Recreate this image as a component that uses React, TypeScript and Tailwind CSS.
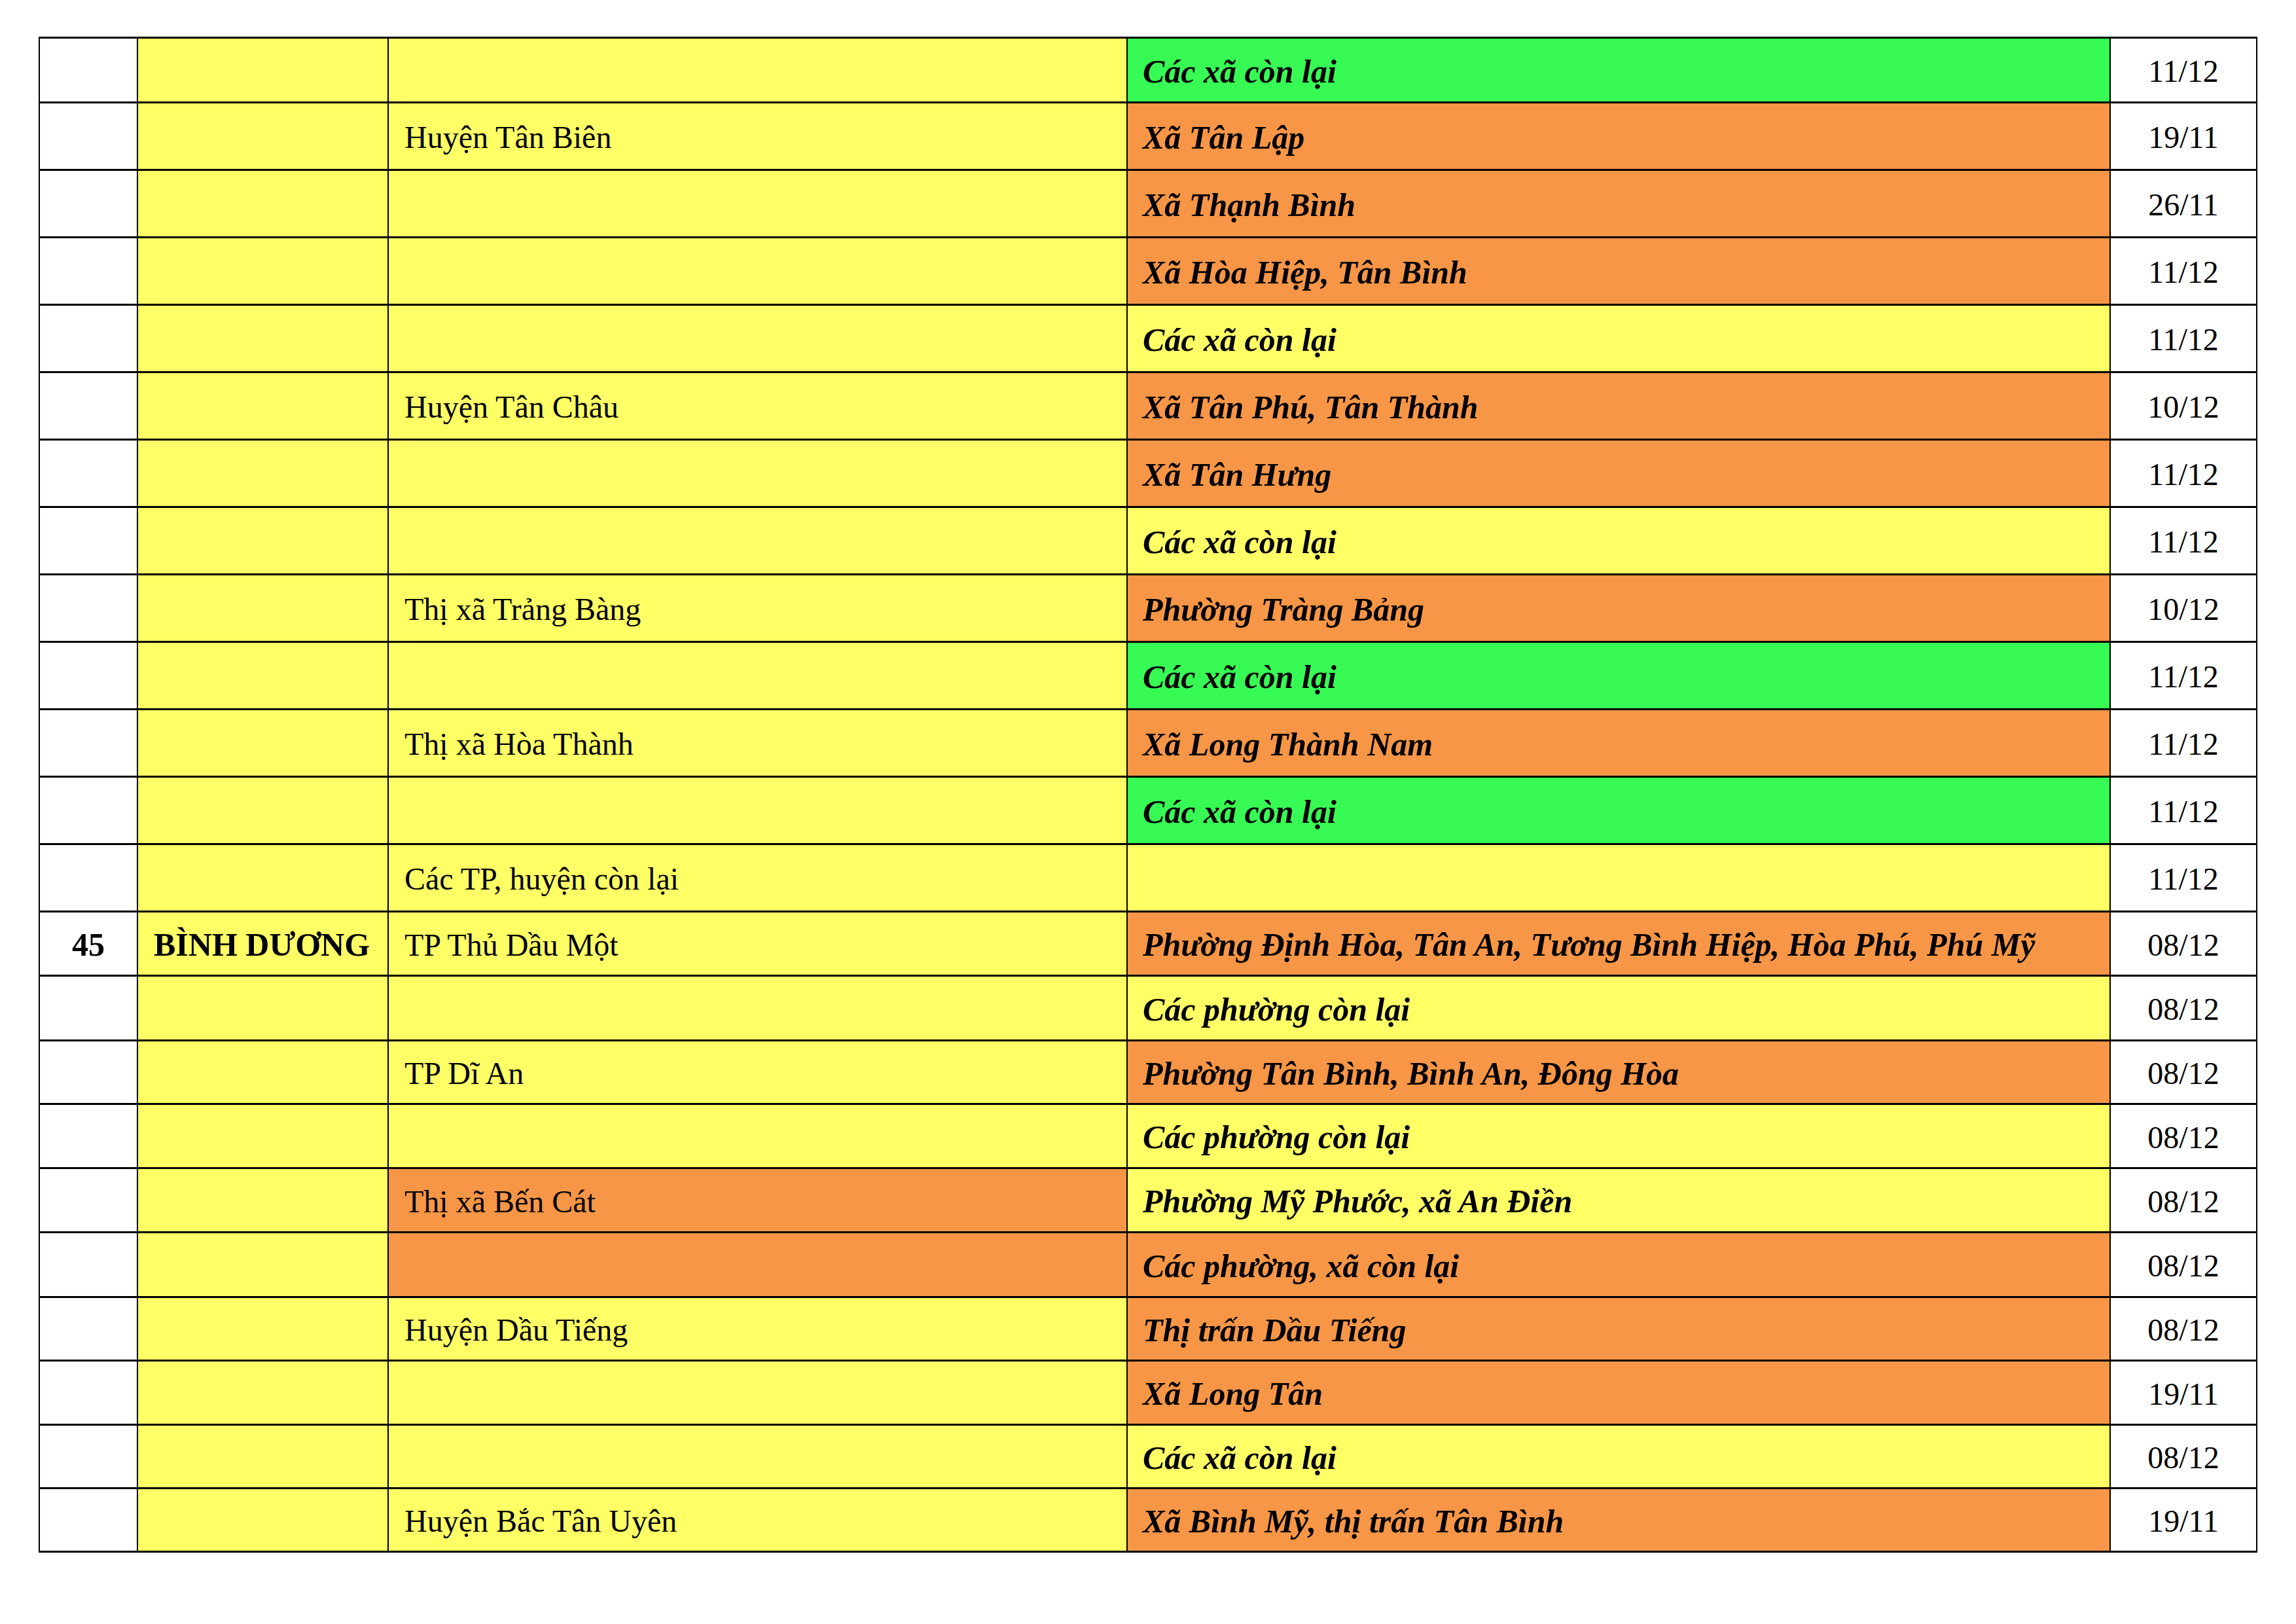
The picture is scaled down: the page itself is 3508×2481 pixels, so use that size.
const Y = 'bg-[#ffff66]'
const O = 'bg-[#f79646]'
const G = 'bg-[#37fa55]'

type Row = {
  h: string
  no?: string
  province?: string
  district?: string
  districtBg?: string
  ward?: string
  wardBg: string
  date: string
}

const rows: Row[] = [
  { h: 'h-[99px]', ward: 'Các xã còn lại', wardBg: G, date: '11/12' },
  { h: 'h-[103px]', district: 'Huyện Tân Biên', ward: 'Xã Tân Lập', wardBg: O, date: '19/11' },
  { h: 'h-[103px]', ward: 'Xã Thạnh Bình', wardBg: O, date: '26/11' },
  { h: 'h-[103px]', ward: 'Xã Hòa Hiệp, Tân Bình', wardBg: O, date: '11/12' },
  { h: 'h-[103px]', ward: 'Các xã còn lại', wardBg: Y, date: '11/12' },
  { h: 'h-[103px]', district: 'Huyện Tân Châu', ward: 'Xã Tân Phú, Tân Thành', wardBg: O, date: '10/12' },
  { h: 'h-[103px]', ward: 'Xã Tân Hưng', wardBg: O, date: '11/12' },
  { h: 'h-[103px]', ward: 'Các xã còn lại', wardBg: Y, date: '11/12' },
  { h: 'h-[103px]', district: 'Thị xã Trảng Bàng', ward: 'Phường Tràng Bảng', wardBg: O, date: '10/12' },
  { h: 'h-[103px]', ward: 'Các xã còn lại', wardBg: G, date: '11/12' },
  { h: 'h-[103px]', district: 'Thị xã Hòa Thành', ward: 'Xã Long Thành Nam', wardBg: O, date: '11/12' },
  { h: 'h-[103px]', ward: 'Các xã còn lại', wardBg: G, date: '11/12' },
  { h: 'h-[103px]', district: 'Các TP, huyện còn lại', wardBg: Y, date: '11/12' },
  { h: 'h-[98px]', no: '45', province: 'BÌNH DƯƠNG', district: 'TP Thủ Dầu Một', ward: 'Phường Định Hòa, Tân An, Tương Bình Hiệp, Hòa Phú, Phú Mỹ', wardBg: O, date: '08/12' },
  { h: 'h-[99px]', ward: 'Các phường còn lại', wardBg: Y, date: '08/12' },
  { h: 'h-[97px]', district: 'TP Dĩ An', ward: 'Phường Tân Bình, Bình An, Đông Hòa', wardBg: O, date: '08/12' },
  { h: 'h-[98px]', ward: 'Các phường còn lại', wardBg: Y, date: '08/12' },
  { h: 'h-[98px]', district: 'Thị xã Bến Cát', districtBg: O, ward: 'Phường Mỹ Phước, xã An Điền', wardBg: Y, date: '08/12' },
  { h: 'h-[99px]', districtBg: O, ward: 'Các phường, xã còn lại', wardBg: O, date: '08/12' },
  { h: 'h-[97px]', district: 'Huyện Dầu Tiếng', ward: 'Thị trấn Dầu Tiếng', wardBg: O, date: '08/12' },
  { h: 'h-[98px]', ward: 'Xã Long Tân', wardBg: O, date: '19/11' },
  { h: 'h-[97px]', ward: 'Các xã còn lại', wardBg: Y, date: '08/12' },
  { h: 'h-[97px]', district: 'Huyện Bắc Tân Uyên', ward: 'Xã Bình Mỹ, thị trấn Tân Bình', wardBg: O, date: '19/11' },
]

export default function App() {
  return (
    <div className="w-[3508px] h-[2481px] bg-white text-black font-['Liberation_Serif','Times_New_Roman',serif] pt-[56px] pl-[59px]">
      <div className="w-[3390px] border-t-[3px] border-l-2 border-r-2 border-black">
        {rows.map((r, i) => (
          <div key={i} className={`flex border-b-[3px] border-black ${r.h}`}>
            <div className="w-[150px] shrink-0 border-r-2 border-black bg-white flex items-center justify-center pt-[4px] text-[50px] font-bold">
              {r.no}
            </div>
            <div className={`w-[383px] shrink-0 border-r-2 border-black ${Y} flex items-center pl-[24px] pt-[4px] text-[50px] font-bold whitespace-nowrap`}>
              {r.province}
            </div>
            <div className={`w-[1129px] shrink-0 border-r-2 border-black ${r.districtBg ?? Y} flex items-center pl-[24px] pt-[4px] text-[48px] whitespace-nowrap`}>
              {r.district}
            </div>
            <div className={`w-[1502px] shrink-0 border-r-2 border-black ${r.wardBg} flex items-center pl-[23px] pt-[4px] text-[50px] font-bold italic whitespace-nowrap`}>
              {r.ward}
            </div>
            <div className="flex-1 bg-white flex items-center justify-center pt-[4px] text-[48px]">
              {r.date}
            </div>
          </div>
        ))}
      </div>
    </div>
  )
}
